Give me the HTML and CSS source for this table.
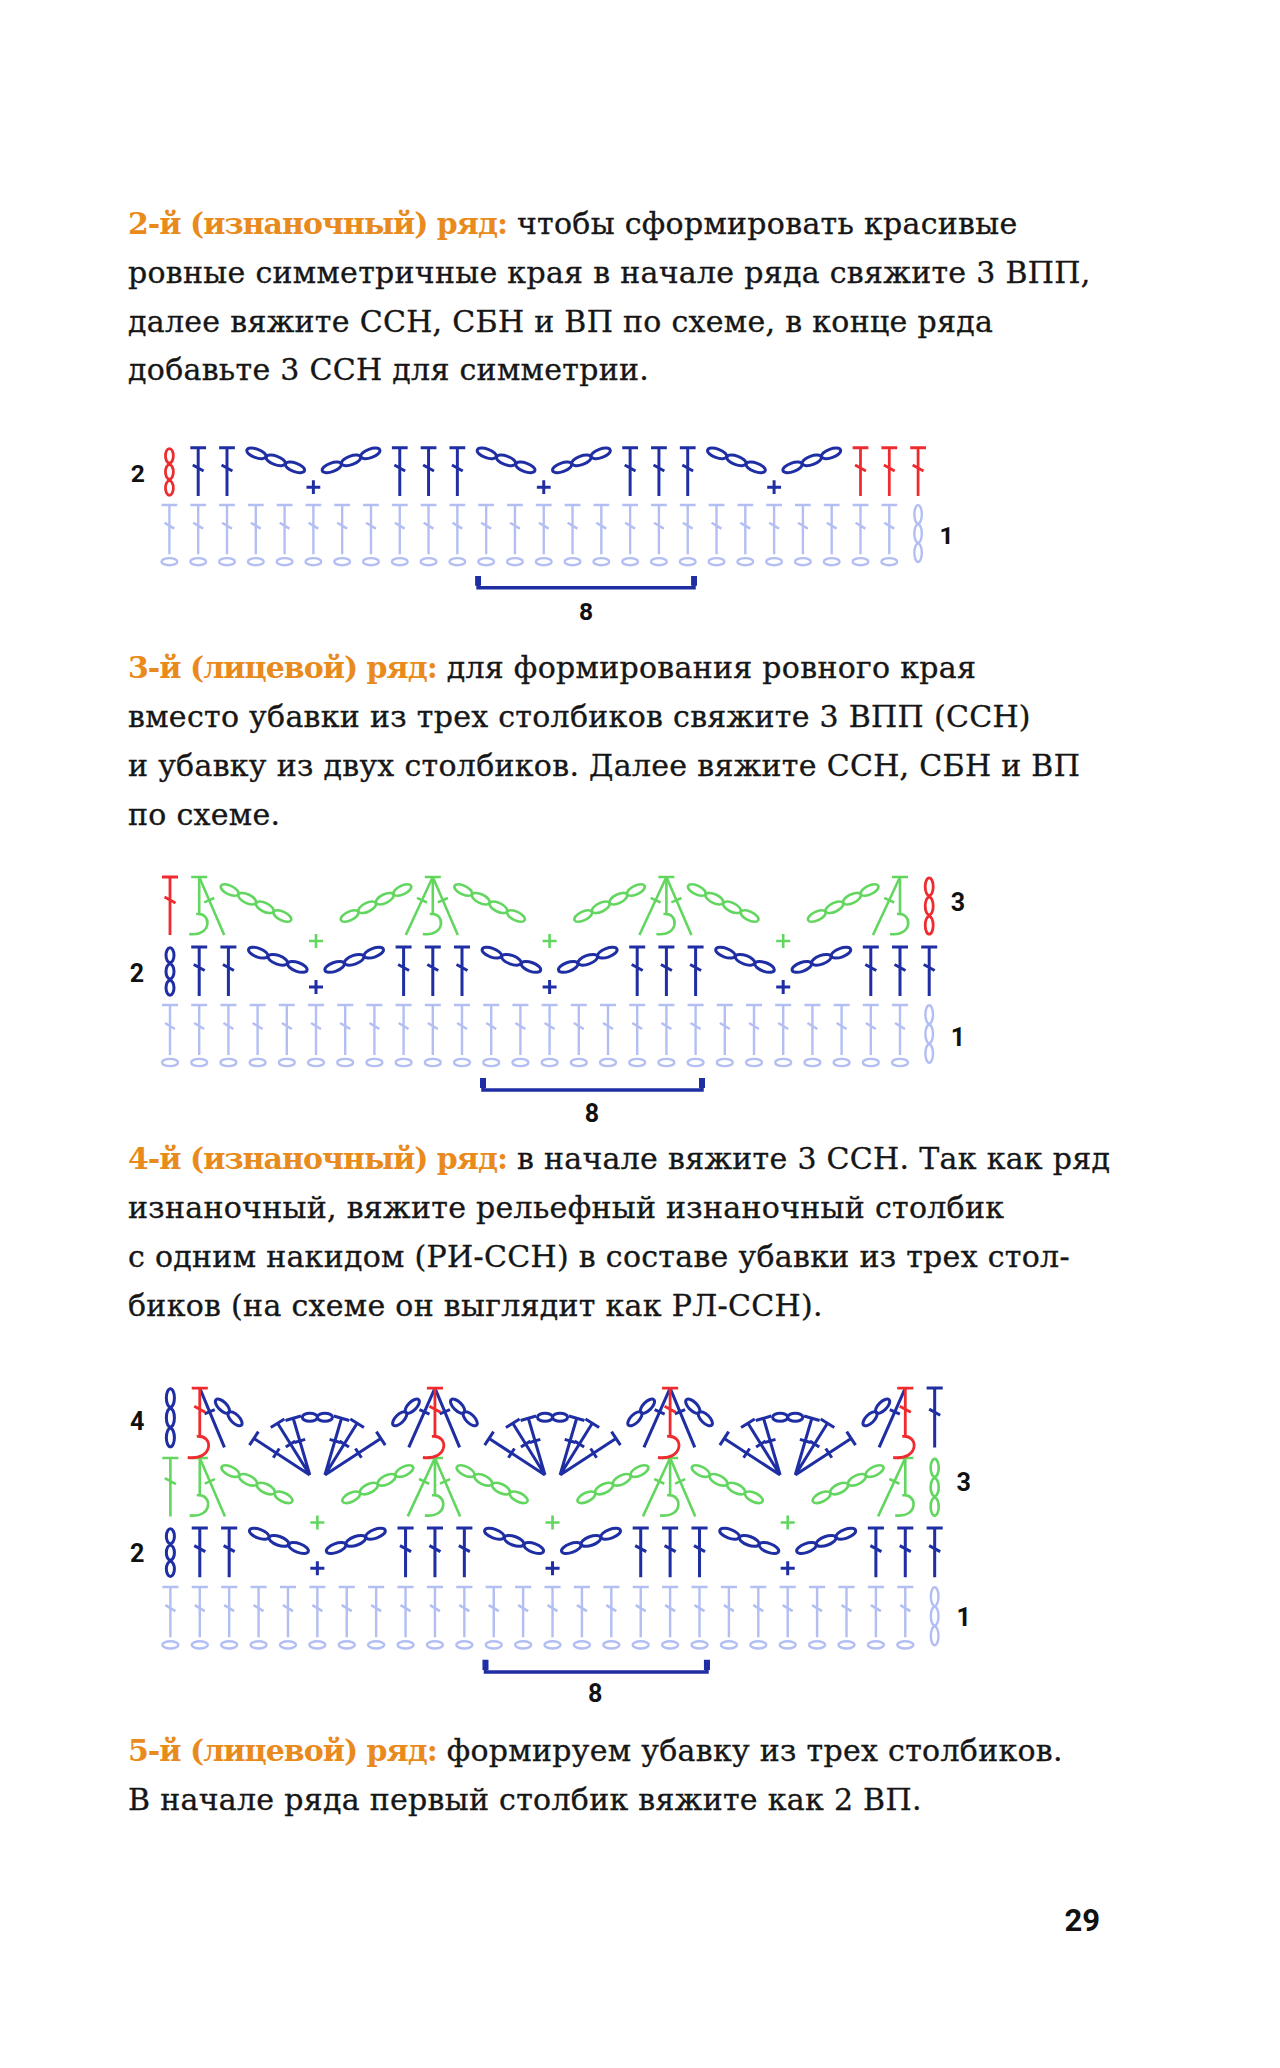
FILE: index.html
```html
<!DOCTYPE html>
<html lang="ru">
<head>
<meta charset="utf-8">
<title>Схема</title>
<link rel="stylesheet" href="styles.css">
</head>
<body>
<div class="page">
<p class="text t1"><span class="hl">2-й (изнаночный) ряд:</span> чтобы сформировать красивые<br>ровные симметричные края в начале ряда свяжите 3 ВПП,<br>далее вяжите ССН, СБН и ВП по схеме, в конце ряда<br>добавьте 3 ССН для симметрии.</p>

<svg class="chart chart1" viewBox="0 0 880 203" xmlns="http://www.w3.org/2000/svg">
<defs>
  <path id="T49" d="M-8,0H8M0,0V49M-5.5,17.5L5.5,23.5"/>
  <path id="T58" d="M-8,0H8M0,0V58M-5.5,20L5.5,26"/>
  <path id="T59" d="M-8,0H8M0,0V59M-5.5,21L5.5,27"/>
  <path id="TP" d="M-8,0H8M0,0V50M-5,18L5,24"/>
  <g id="PS"><use href="#TP"/><ellipse cx="0" cy="57.5" rx="8" ry="3.6"/></g>
  <g id="P8"><use href="#PS" x="50"/><use href="#PS" x="79.2"/><use href="#PS" x="108.4"/><use href="#PS" x="137.6"/><use href="#PS" x="166.8"/><use href="#PS" x="196"/><use href="#PS" x="225.2"/><use href="#PS" x="254.4"/></g>
  <g id="VC49"><ellipse cx="0" cy="8.2" rx="4" ry="7.4"/><ellipse cx="0" cy="24.5" rx="4" ry="7.4"/><ellipse cx="0" cy="40.8" rx="4" ry="7.4"/></g>
  <g id="VC58"><ellipse cx="0" cy="9.7" rx="4" ry="8.9"/><ellipse cx="0" cy="29" rx="4" ry="8.9"/><ellipse cx="0" cy="48.3" rx="4" ry="8.9"/></g>
  <g id="VC59"><ellipse cx="0" cy="9.8" rx="4" ry="9.2"/><ellipse cx="0" cy="29.5" rx="4" ry="9.2"/><ellipse cx="0" cy="49.2" rx="4" ry="9.2"/></g>
  <g id="VCP"><ellipse cx="0" cy="9.5" rx="3.8" ry="9.3"/><ellipse cx="0" cy="29" rx="3.8" ry="9.3"/><ellipse cx="0" cy="48.5" rx="3.8" ry="9.3"/></g>
  <path id="PL" d="M-7,0H7M0,-7V7"/>
  <g id="CD3"><ellipse cx="138.2" cy="5.7" rx="10.2" ry="4.4" transform="rotate(20 138.2 5.7)"/><ellipse cx="157.8" cy="12.8" rx="10.2" ry="4.4" transform="rotate(20 157.8 12.8)"/><ellipse cx="177.4" cy="19.9" rx="10.2" ry="4.4" transform="rotate(20 177.4 19.9)"/></g>
  <g id="CU3"><ellipse cx="214.6" cy="19.9" rx="10.2" ry="4.4" transform="rotate(-20 214.6 19.9)"/><ellipse cx="234.2" cy="12.8" rx="10.2" ry="4.4" transform="rotate(-20 234.2 12.8)"/><ellipse cx="253.8" cy="5.7" rx="10.2" ry="4.4" transform="rotate(-20 253.8 5.7)"/></g>
  <g id="B8"><use href="#T49" x="79.2"/><use href="#T49" x="108.4"/><use href="#CD3"/><use href="#PL" x="196" y="40"/><use href="#CU3"/></g>
  <g id="GD4"><ellipse cx="109.6" cy="13" rx="9.6" ry="4.4" transform="rotate(26 109.6 13)"/><ellipse cx="127.2" cy="21.7" rx="9.6" ry="4.4" transform="rotate(26 127.2 21.7)"/><ellipse cx="144.8" cy="30.3" rx="9.6" ry="4.4" transform="rotate(26 144.8 30.3)"/><ellipse cx="162.4" cy="39" rx="9.6" ry="4.4" transform="rotate(26 162.4 39)"/></g>
  <g id="GU4"><ellipse cx="229.6" cy="39" rx="9.6" ry="4.4" transform="rotate(-26 229.6 39)"/><ellipse cx="247.2" cy="30.3" rx="9.6" ry="4.4" transform="rotate(-26 247.2 30.3)"/><ellipse cx="264.8" cy="21.7" rx="9.6" ry="4.4" transform="rotate(-26 264.8 21.7)"/><ellipse cx="282.4" cy="13" rx="9.6" ry="4.4" transform="rotate(-26 282.4 13)"/></g>
  <g id="G3"><use href="#GD4"/><use href="#PL" x="196" y="64"/><use href="#GU4"/></g>
  <path id="GC" d="M-8,0H8M0,0V37M-3,37C13,35 13,60 -10,57"/>
  <path id="GL" d="M0,0L-27,58M-15.8,20.9L-5.8,25.5"/>
  <path id="GR" d="M0,0L25,58M4.95,25.4L15.05,21"/>
  <path id="RT" d="M-8,0H8M0,0V48M-5.5,18L5.5,24M-3,48C14,46 14,72 -12,69"/>
  <path id="BL" d="M0,0L-26,59M-15.4,21.4L-5.4,25.8"/>
  <path id="BR" d="M0,0L24.5,59M4.7,25.7L14.9,21.5"/>
  <g id="BCL"><ellipse cx="-35" cy="30.5" rx="9" ry="4.2" transform="rotate(-45 -35 30.5)"/><ellipse cx="-22.5" cy="18" rx="9" ry="4.2" transform="rotate(-45 -22.5 18)"/></g>
  <g id="BCR"><ellipse cx="22.5" cy="18" rx="9" ry="4.2" transform="rotate(45 22.5 18)"/><ellipse cx="35" cy="30.5" rx="9" ry="4.2" transform="rotate(45 35 30.5)"/></g>
  <g id="SH">
    <path d="M-7.5,86.4L-63,50M-7.5,86.4L-39.5,35M-7.5,86.4L-24,30M7.5,86.4L63,50M7.5,86.4L39.5,35M7.5,86.4L24,30M-58.6,43.3L-67.4,56.7M-32.7,30.8L-46.3,39.2M-16.3,27.75L-31.7,32.25M58.6,43.3L67.4,56.7M32.7,30.8L46.3,39.2M16.3,27.75L31.7,32.25M-37.8,60L-43.8,69.2M-22,52.7L-31.4,58.5M-12.1,51L-22.7,54.1M37.8,60L43.8,69.2M22,52.7L31.4,58.5M12.1,51L22.7,54.1"/>
    <ellipse cx="-7.5" cy="29" rx="7.5" ry="4"/><ellipse cx="7.5" cy="29" rx="7.5" ry="4"/>
  </g>
</defs>
<g fill="none">
  <g class="pale">
    <use href="#P8" y="76"/><use href="#P8" x="233.6" y="76"/><use href="#P8" x="467.2" y="76"/>
    <use href="#PS" x="750.8" y="76"/><use href="#PS" x="780" y="76"/><use href="#VCP" x="809.2" y="76"/>
  </g>
  <g class="blue">
    <use href="#B8" y="18"/><use href="#B8" x="233.6" y="18"/><use href="#B8" x="467.2" y="18"/>
    <use href="#T49" x="283.6" y="18"/><use href="#T49" x="517.2" y="18"/>
  </g>
  <g class="red">
    <use href="#VC49" x="50" y="18"/>
    <use href="#T49" x="750.8" y="18"/><use href="#T49" x="780" y="18"/><use href="#T49" x="809.2" y="18"/>
  </g>
  <path class="brk" d="M363,149V160H582V149"/>
  <path class="tick" d="M363,148V158M582,148V158"/>
</g>
<text class="lbl" x="18" y="44">2</text>
<text class="lbl" x="838" y="106.5">1</text>
<text class="lbl" x="472.5" y="184.5">8</text>
</svg>

<p class="text t2"><span class="hl">3-й (лицевой) ряд:</span> для формирования ровного края<br>вместо убавки из трех столбиков свяжите 3 ВПП (ССН)<br>и убавку из двух столбиков. Далее вяжите ССН, СБН и ВП<br>по схеме.</p>

<svg class="chart chart2" viewBox="0 0 880 260" xmlns="http://www.w3.org/2000/svg">
<g fill="none">
  <g class="pale">
    <use href="#P8" y="135"/><use href="#P8" x="233.6" y="135"/><use href="#P8" x="467.2" y="135"/>
    <use href="#PS" x="750.8" y="135"/><use href="#PS" x="780" y="135"/><use href="#VCP" x="809.2" y="135"/>
  </g>
  <g class="blue">
    <use href="#VC49" x="50" y="77"/>
    <use href="#B8" y="77"/><use href="#B8" x="233.6" y="77"/><use href="#B8" x="467.2" y="77"/>
    <use href="#T49" x="283.6" y="77"/><use href="#T49" x="517.2" y="77"/>
    <use href="#T49" x="750.8" y="77"/><use href="#T49" x="780" y="77"/><use href="#T49" x="809.2" y="77"/>
  </g>
  <g class="green">
    <use href="#G3" y="7"/><use href="#G3" x="233.6" y="7"/><use href="#G3" x="467.2" y="7"/>
    <use href="#GC" x="79.2" y="7"/><use href="#GR" x="79.2" y="7"/>
    <use href="#GC" x="312.8" y="7"/><use href="#GL" x="312.8" y="7"/><use href="#GR" x="312.8" y="7"/>
    <use href="#GC" x="546.4" y="7"/><use href="#GL" x="546.4" y="7"/><use href="#GR" x="546.4" y="7"/>
    <use href="#GC" x="780" y="7"/><use href="#GL" x="780" y="7"/>
  </g>
  <g class="red">
    <use href="#T58" x="50" y="7"/>
    <use href="#VC58" x="809.2" y="7"/>
  </g>
  <path class="brk" d="M363,209V220H582V209"/>
  <path class="tick" d="M363,208V218M582,208V218"/>
</g>
<text class="lbl" x="838" y="32">3</text>
<text class="lbl" x="17" y="103">2</text>
<text class="lbl" x="838" y="167">1</text>
<text class="lbl" x="472" y="243">8</text>
</svg>

<p class="text t3"><span class="hl">4-й (изнаночный) ряд:</span> в начале вяжите 3 ССН. Так как ряд<br>изнаночный, вяжите рельефный изнаночный столбик<br>с одним накидом (РИ-ССН) в составе убавки из трех стол-<br>биков (на схеме он выглядит как РЛ-ССН).</p>

<svg class="chart chart3" viewBox="0 0 880 326" xmlns="http://www.w3.org/2000/svg">
<g fill="none">
  <g class="pale">
    <use href="#P8" y="205.6"/><use href="#P8" x="233.6" y="205.6"/><use href="#P8" x="467.2" y="205.6"/>
    <use href="#PS" x="750.8" y="205.6"/><use href="#PS" x="780" y="205.6"/><use href="#VCP" x="809.2" y="205.6"/>
  </g>
  <g class="blue">
    <use href="#VC49" x="50" y="147"/>
    <use href="#B8" y="147"/><use href="#B8" x="233.6" y="147"/><use href="#B8" x="467.2" y="147"/>
    <use href="#T49" x="283.6" y="147"/><use href="#T49" x="517.2" y="147"/>
    <use href="#T49" x="750.8" y="147"/><use href="#T49" x="780" y="147"/><use href="#T49" x="809.2" y="147"/>
  </g>
  <g class="green">
    <use href="#T58" x="50" y="77.5"/>
    <use href="#G3" y="77.5"/><use href="#G3" x="233.6" y="77.5"/><use href="#G3" x="467.2" y="77.5"/>
    <use href="#GC" x="79.2" y="77.5"/><use href="#GR" x="79.2" y="77.5"/>
    <use href="#GC" x="312.8" y="77.5"/><use href="#GL" x="312.8" y="77.5"/><use href="#GR" x="312.8" y="77.5"/>
    <use href="#GC" x="546.4" y="77.5"/><use href="#GL" x="546.4" y="77.5"/><use href="#GR" x="546.4" y="77.5"/>
    <use href="#GC" x="780" y="77.5"/><use href="#GL" x="780" y="77.5"/>
    <use href="#VC58" x="809.2" y="77.5"/>
  </g>
  <g class="blue">
    <use href="#VC59" x="50" y="8"/>
    <use href="#BR" x="79.2" y="8"/><use href="#BCR" x="79.2" y="8"/>
    <use href="#BL" x="312.8" y="8"/><use href="#BR" x="312.8" y="8"/><use href="#BCL" x="312.8" y="8"/><use href="#BCR" x="312.8" y="8"/>
    <use href="#BL" x="546.4" y="8"/><use href="#BR" x="546.4" y="8"/><use href="#BCL" x="546.4" y="8"/><use href="#BCR" x="546.4" y="8"/>
    <use href="#BL" x="780" y="8"/><use href="#BCL" x="780" y="8"/>
    <use href="#SH" x="196" y="8"/><use href="#SH" x="429.6" y="8"/><use href="#SH" x="663.2" y="8"/>
    <use href="#T59" x="809.2" y="8"/>
  </g>
  <g class="red">
    <use href="#RT" x="79.2" y="8"/><use href="#RT" x="312.8" y="8"/><use href="#RT" x="546.4" y="8"/><use href="#RT" x="780" y="8"/>
  </g>
  <path class="brk" d="M363,279V290H583V279"/>
  <path class="tick" d="M363,278V288M583,278V288"/>
</g>
<text class="lbl" x="17" y="41.7">4</text>
<text class="lbl" x="838" y="102">3</text>
<text class="lbl" x="17" y="172">2</text>
<text class="lbl" x="838" y="236">1</text>
<text class="lbl" x="472" y="311">8</text>
</svg>

<p class="text t4"><span class="hl">5-й (лицевой) ряд:</span> формируем убавку из трех столбиков.<br>В начале ряда первый столбик вяжите как 2 ВП.</p>

<div class="pagenum">29</div>
</div>
</body>
</html>
```

FILE: styles.css
```css
html, body {
  margin: 0;
  padding: 0;
  background: #ffffff;
}

body {
  font-family: "DejaVu Serif", serif;
}

.page {
  width: 1280px;
  padding-top: 200px;
}

.text {
  margin: 0 0 0 128px;
  font-family: "DejaVu Serif", "Liberation Serif", serif;
  font-size: 30px;
  line-height: 48.8px;
  letter-spacing: 0.3px;
  color: #161616;
  -webkit-text-stroke: 0.35px #161616;
  white-space: nowrap;
}

.hl {
  color: #e98a1c;
  -webkit-text-stroke: 0;
  font-weight: 700;
  letter-spacing: -1px;
}

.t2 { margin-top: 14px; }
.t3 { margin-top: 5px; }
.t4 { margin-top: 18.8px; }

.chart {
  display: block;
  margin-left: 120px;
  overflow: visible;
}

.chart1 {
  width: 868px;
  height: 200.2px;
  margin-top: 34.8px;
}

.chart2 {
  width: 880px;
  height: 260px;
  margin-top: 30.8px;
}

.chart3 {
  width: 886px;
  height: 328.2px;
  margin-top: 49.8px;
}

.pale {
  stroke: #b3bef3;
  stroke-width: 2.4;
}

.blue {
  stroke: #1f2fa3;
  stroke-width: 3;
}

.red {
  stroke: #ee2b2e;
  stroke-width: 2.8;
}

.green {
  stroke: #63d660;
  stroke-width: 2.6;
}

.brk {
  stroke: #1f2fa3;
  stroke-width: 3.5;
  fill: none;
}

.tick {
  stroke: #1f2fa3;
  stroke-width: 6;
}

.lbl {
  font-family: Roboto, "Liberation Sans", sans-serif;
  font-weight: 700;
  font-size: 25px;
  fill: #111111;
  text-anchor: middle;
  dominant-baseline: central;
}

.pagenum {
  margin-top: 78.4px;
  width: 1100px;
  text-align: right;
  font-family: Roboto, "Liberation Sans", sans-serif;
  font-weight: 700;
  font-size: 31px;
  line-height: 36px;
  color: #111111;
}
```
